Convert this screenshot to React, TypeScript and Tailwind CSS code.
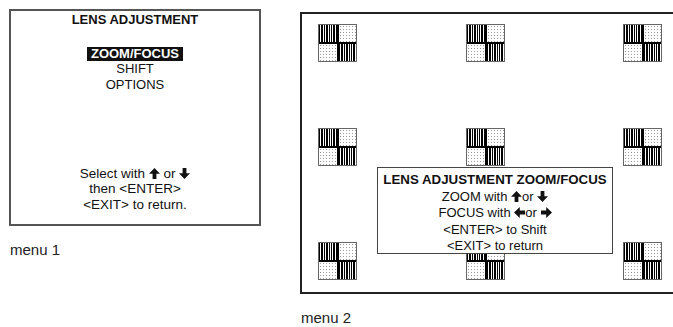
import React from 'react';

const font = { fontFamily: '"Liberation Sans", Arial, sans-serif' };

const Arrow = ({ dir }: { dir: 'up' | 'down' | 'left' | 'right' }) => {
  const rot = { up: 0, right: 90, down: 180, left: 270 }[dir];
  return (
    <svg width="11" height="11" viewBox="0 0 11 11" className="inline-block align-[-1px]">
      <path d="M5.5 0 L11 5.8 L7.4 5.8 L7.4 11 L3.6 11 L3.6 5.8 L0 5.8 Z" fill="#111" transform={`rotate(${rot} 5.5 5.5)`} />
    </svg>
  );
};

const Stripes = () => (
  <div className="bg-[repeating-linear-gradient(90deg,#000_0_1.4px,#fff_1.4px_2.4px)]" />
);

const Dots = () => (
  <div className="bg-white bg-[radial-gradient(#9a9a9a_0.7px,transparent_0.9px)] bg-[length:3px_3px]" />
);

const Pattern = () => (
  <div className="w-[39px] h-[38px] border border-[#666] bg-black grid grid-cols-2 grid-rows-2 gap-[2px]">
    <Stripes />
    <Dots />
    <Dots />
    <Stripes />
  </div>
);

const PatternRow = () => (
  <div className="flex">
    <Pattern />
    <div className="ml-[109px]">
      <Pattern />
    </div>
    <div className="ml-[118px]">
      <Pattern />
    </div>
  </div>
);

export default function App() {
  return (
    <div className="w-[673px] h-[327px] overflow-hidden bg-white text-[#111] flex" style={font}>
      <div className="ml-[9px] mt-[9px] flex flex-col shrink-0">
        <div className="w-[252px] h-[217px] border-2 border-[#555] flex flex-col items-center">
          <div className="pt-[1px] text-[13px] leading-[16px] font-bold">LENS ADJUSTMENT</div>
          <div className="mt-[19px] bg-[#111] text-white text-[13px] leading-[14px] font-bold px-[4px]">ZOOM/FOCUS</div>
          <div className="text-[13px] leading-[16px]">SHIFT</div>
          <div className="text-[13px] leading-[16px]">OPTIONS</div>
          <div className="mt-auto pb-[12px] text-[13.5px] leading-[15.5px] text-center">
            <div>
              Select with <Arrow dir="up" /> or <Arrow dir="down" />
            </div>
            <div>then &lt;ENTER&gt;</div>
            <div>&lt;EXIT&gt; to return.</div>
          </div>
        </div>
        <div className="mt-[15px] ml-[1px] text-[15px] leading-[18px] text-[#222]">menu 1</div>
      </div>

      <div className="ml-[39px] mt-[12px] flex flex-col shrink-0">
        <div className="relative w-[420px] h-[284px] border-2 border-[#222] pl-[16px] pt-[10px]">
          <PatternRow />
          <div className="mt-[66px]">
            <PatternRow />
          </div>
          <div className="mt-[76px]">
            <PatternRow />
          </div>
          <div className="absolute left-[75px] top-[153px] w-[236px] h-[87px] border border-[#444] bg-white flex flex-col items-center pt-[4px] text-[13px] leading-[16.5px]">
            <div className="font-bold text-[13.3px]">LENS ADJUSTMENT ZOOM/FOCUS</div>
            <div>
              ZOOM with <Arrow dir="up" />or <Arrow dir="down" />
            </div>
            <div>
              FOCUS with <Arrow dir="left" />or <Arrow dir="right" />
            </div>
            <div>&lt;ENTER&gt; to Shift</div>
            <div>&lt;EXIT&gt; to return</div>
          </div>
        </div>
        <div className="mt-[15px] ml-[1px] text-[15px] leading-[18px] text-[#222]">menu 2</div>
      </div>
    </div>
  );
}
